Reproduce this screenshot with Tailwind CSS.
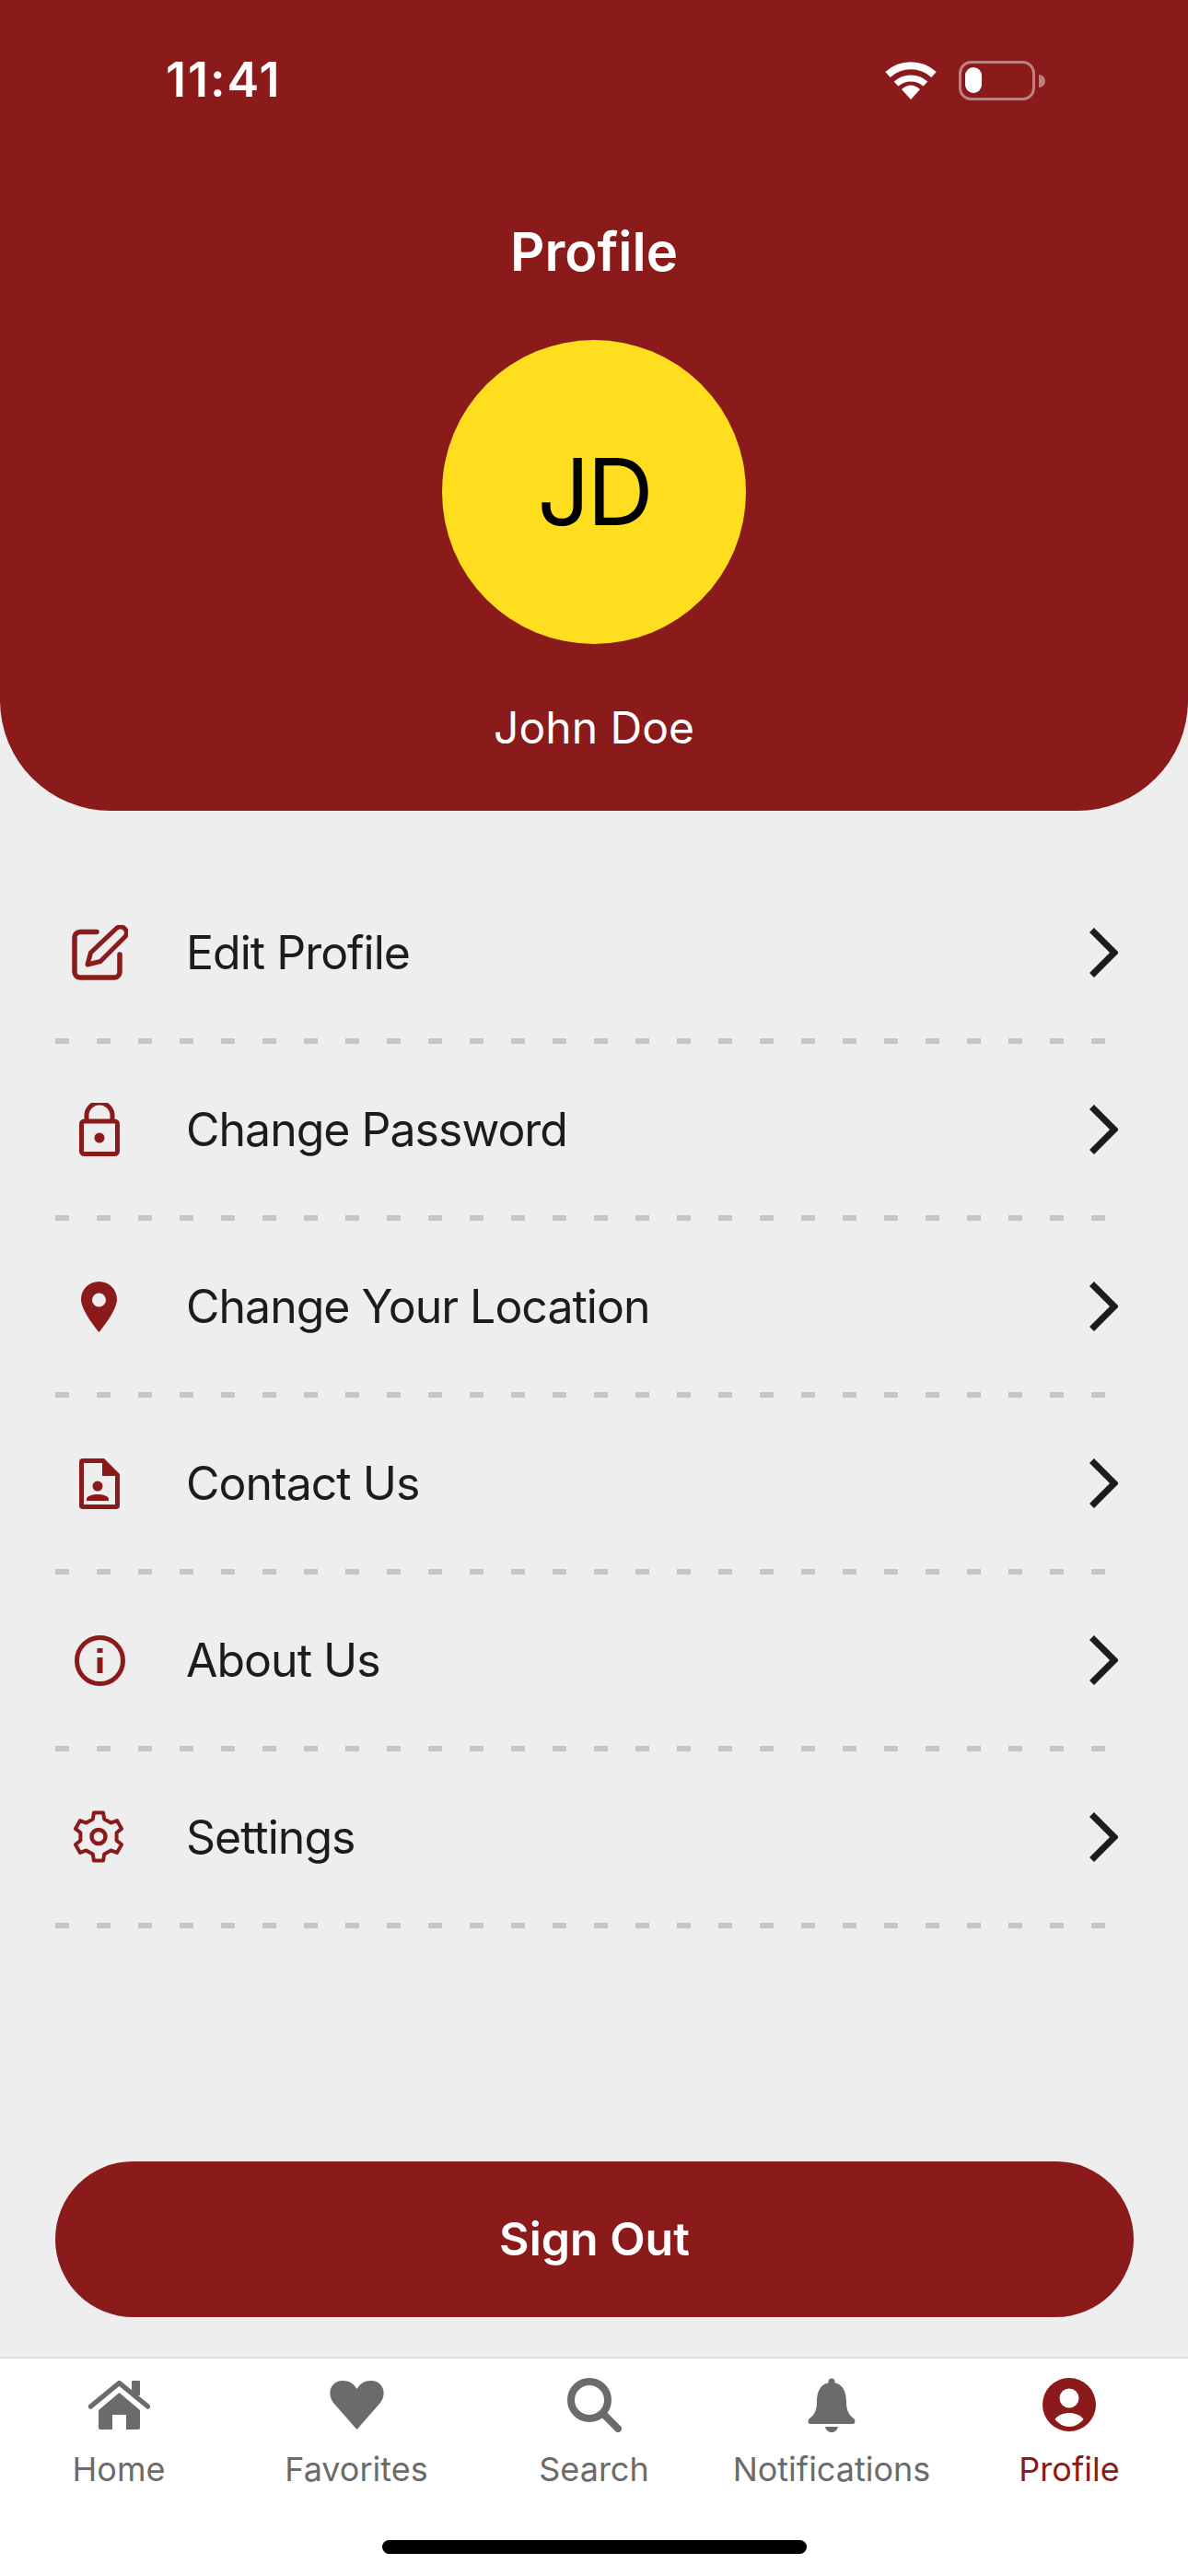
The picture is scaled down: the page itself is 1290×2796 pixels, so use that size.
<!DOCTYPE html>
<html lang="en">
<head>
  <meta charset="UTF-8" />
  <title>Profile</title>
  <script src="https://cdn.jsdelivr.net/npm/@tailwindcss/browser@4"></script>
</head>
<body class="w-[1290px] h-[2796px] overflow-hidden flex flex-col bg-[#eeeeee] font-['Inter',sans-serif]">

  <!-- header -->
  <header class="h-[880px] shrink-0 flex flex-col bg-[#8b1a1a] rounded-b-[120px] text-white">
    <div class="h-[174px] flex items-center justify-between pl-[180px] pr-[155px]">
      <span class="text-[52px] leading-none font-semibold tracking-[2px]">11:41</span>
      <div class="flex items-center gap-[23px]">
        <svg class="w-[58px] h-[42px]" viewBox="0 0 58 42" fill="none" stroke="#fff">
          <path d="M4 15A37 37 0 0 1 54 15" stroke-width="8" />
          <path d="M13 25A24 24 0 0 1 45 25" stroke-width="7" />
          <path d="M29 42L19 31Q29 22 39 31Z" fill="#fff" stroke="none" />
        </svg>
        <svg class="w-[94px] h-[43px]" viewBox="0 0 94 43" fill="none">
          <rect x="1.5" y="1.5" width="80" height="40" rx="12" stroke="#fff" stroke-opacity=".45" stroke-width="3" />
          <rect x="7" y="7" width="18" height="28" rx="9" fill="#fff" />
          <path d="M87 15a7 7 0 0 1 0 14z" fill="#fff" fill-opacity=".45" />
        </svg>
      </div>
    </div>
    <h1 class="mt-[59px] h-[80px] flex items-center justify-center text-[58px] font-semibold">Profile</h1>
    <div class="mt-[56px] mx-auto w-[330px] h-[330px] rounded-full bg-[#ffdd1f] flex items-center justify-center text-[100px] tracking-[-3px] text-black">JD</div>
    <p class="mt-[61px] h-[60px] flex items-center justify-center text-[48px]">John Doe</p>
  </header>

  <main class="flex-1 flex flex-col pt-[61px]">
    <ul class="text-[50px] tracking-[-1px] text-[#1c1c1e]">
      <li>
        <a class="h-[186px] flex items-center pl-[78px] pr-[76px]">
          <span class="w-[124px] h-[60px] shrink-0">
            <svg class="w-[61px] h-[60px]" viewBox="0 0 61 60" fill="none" stroke="#8b1a1a" stroke-width="5.500" stroke-linecap="round" stroke-linejoin="round">
              <path d="M27 7.500H9a6 6 0 0 0-6 6V51a6 6 0 0 0 6 6H46a6 6 0 0 0 6-6V32" />
              <path d="M17 43L20.500 30L48 4a6.500 6.500 0 0 1 9.500 9L31 39.500Z" stroke-width="5" />
            </svg>
          </span>
          <span class="flex-1">Edit Profile</span>
          <svg class="w-[31px] h-[54px]" viewBox="0 0 31 54" fill="none" stroke="#1c1c1e" stroke-width="7"><path d="M2.500 2.500L27 27L2.500 51.500" /></svg>
        </a>
        <div class="ml-[60px] w-[1140px] h-[6px] bg-[repeating-linear-gradient(90deg,#c6c6c8_0_15px,transparent_15px_45px)]"></div>
      </li>
      <li>
        <a class="h-[186px] flex items-center pl-[78px] pr-[76px]">
          <span class="w-[124px] h-[60px] shrink-0 flex items-center pl-[8px]">
            <svg class="w-[44px] h-[58px]" viewBox="0 0 44 58" fill="none" stroke="#8b1a1a" stroke-width="5" stroke-linejoin="round">
              <path d="M8 20V14a14 14 0 0 1 28 0V20" />
              <rect x="2.500" y="20" width="39" height="35.500" rx="3" />
              <circle cx="22" cy="38" r="5.500" fill="#8b1a1a" stroke="none" />
            </svg>
          </span>
          <span class="flex-1">Change Password</span>
          <svg class="w-[31px] h-[54px]" viewBox="0 0 31 54" fill="none" stroke="#1c1c1e" stroke-width="7"><path d="M2.500 2.500L27 27L2.500 51.500" /></svg>
        </a>
        <div class="ml-[60px] w-[1140px] h-[6px] bg-[repeating-linear-gradient(90deg,#c6c6c8_0_15px,transparent_15px_45px)]"></div>
      </li>
      <li>
        <a class="h-[186px] flex items-center pl-[78px] pr-[76px]">
          <span class="w-[124px] h-[60px] shrink-0 flex items-center pl-[10px]">
            <svg class="w-[39px] h-[55px]" viewBox="0 0 39 55" fill="#8b1a1a">
              <path fill-rule="evenodd" d="M19.500 0C8.500 0 0 8.500 0 19.500C0 32 19.500 55 19.500 55S39 32 39 19.500C39 8.500 30.500 0 19.500 0ZM19.500 12.500a7.500 7.500 0 1 1 0 15a7.500 7.500 0 1 1 0-15Z" />
            </svg>
          </span>
          <span class="flex-1">Change Your Location</span>
          <svg class="w-[31px] h-[54px]" viewBox="0 0 31 54" fill="none" stroke="#1c1c1e" stroke-width="7"><path d="M2.500 2.500L27 27L2.500 51.500" /></svg>
        </a>
        <div class="ml-[60px] w-[1140px] h-[6px] bg-[repeating-linear-gradient(90deg,#c6c6c8_0_15px,transparent_15px_45px)]"></div>
      </li>
      <li>
        <a class="h-[186px] flex items-center pl-[78px] pr-[76px]">
          <span class="w-[124px] h-[60px] shrink-0 flex items-center pl-[8px]">
            <svg class="w-[44px] h-[55px]" viewBox="0 0 44 55" fill="#8b1a1a">
              <path fill-rule="evenodd" d="M4 0H27L44 17V51a4 4 0 0 1-4 4H4a4 4 0 0 1-4-4V4a4 4 0 0 1 4-4ZM5 5V50H39V19H25V5Z" />
              <circle cx="20" cy="30" r="5.500" />
              <path d="M8 46V44C8 41 14 39 20 39S32 41 32 44V46Z" />
            </svg>
          </span>
          <span class="flex-1">Contact Us</span>
          <svg class="w-[31px] h-[54px]" viewBox="0 0 31 54" fill="none" stroke="#1c1c1e" stroke-width="7"><path d="M2.500 2.500L27 27L2.500 51.500" /></svg>
        </a>
        <div class="ml-[60px] w-[1140px] h-[6px] bg-[repeating-linear-gradient(90deg,#c6c6c8_0_15px,transparent_15px_45px)]"></div>
      </li>
      <li>
        <a class="h-[186px] flex items-center pl-[78px] pr-[76px]">
          <span class="w-[124px] h-[60px] shrink-0 flex items-center pl-[3px]">
            <svg class="w-[55px] h-[55px]" viewBox="0 0 55 55" fill="#8b1a1a">
              <circle cx="27.500" cy="27.500" r="25" fill="none" stroke="#8b1a1a" stroke-width="5" />
              <rect x="24.500" y="14" width="6" height="5" />
              <rect x="24.500" y="24" width="6" height="17" />
            </svg>
          </span>
          <span class="flex-1">About Us</span>
          <svg class="w-[31px] h-[54px]" viewBox="0 0 31 54" fill="none" stroke="#1c1c1e" stroke-width="7"><path d="M2.500 2.500L27 27L2.500 51.500" /></svg>
        </a>
        <div class="ml-[60px] w-[1140px] h-[6px] bg-[repeating-linear-gradient(90deg,#c6c6c8_0_15px,transparent_15px_45px)]"></div>
      </li>
      <li>
        <a class="h-[186px] flex items-center pl-[78px] pr-[76px]">
          <span class="w-[124px] h-[60px] shrink-0">
            <svg class="w-[58px] h-[59px]" viewBox="0 0 58 59" fill="none" stroke="#8b1a1a" stroke-width="4" stroke-linejoin="round">
              <g transform="translate(29 29.500)">
                <polygon points="-6.200,-19 -5.100,-26 5.100,-26 6.200,-19 13.400,-14.900 20,-17.400 25.100,-8.600 19.600,-4.200 19.600,4.200 25.100,8.600 20,17.400 13.400,14.900 6.200,19 5.100,26 -5.100,26 -6.200,19 -13.400,14.900 -20,17.400 -25.100,8.600 -19.600,4.200 -19.600,-4.200 -25.100,-8.600 -20,-17.400 -13.400,-14.900" />
                <circle r="7.500" stroke-width="4.500" />
              </g>
            </svg>
          </span>
          <span class="flex-1">Settings</span>
          <svg class="w-[31px] h-[54px]" viewBox="0 0 31 54" fill="none" stroke="#1c1c1e" stroke-width="7"><path d="M2.500 2.500L27 27L2.500 51.500" /></svg>
        </a>
        <div class="ml-[60px] w-[1140px] h-[6px] bg-[repeating-linear-gradient(90deg,#c6c6c8_0_15px,transparent_15px_45px)]"></div>
      </li>
    </ul>

    <button class="mt-auto mb-[43px] ml-[60px] mr-[59px] h-[169px] rounded-full bg-[#8b1a1a] text-white text-[50px] font-semibold">Sign Out</button>
  </main>

  <!-- tab bar -->
  <nav class="h-[238px] shrink-0 bg-white border-t-2 border-[#dddddd] pt-[20px]">
    <div class="grid grid-cols-5 text-[36px] text-[#6b6b6b]">
      <div class="flex flex-col items-center">
        <span class="h-[60px] flex items-center">
          <svg class="w-[67px] h-[53px]" viewBox="0 0 67 53" fill="#6b6b6b">
            <path d="M2.500 28L33.500 2.500L64.500 28" fill="none" stroke="#6b6b6b" stroke-width="5.500" stroke-linecap="round" stroke-linejoin="round" />
            <rect x="47" y="0" width="9" height="16" rx="1" />
            <path d="M33.500 13L56 32V51a2 2 0 0 1-2 2H41V37H26V53H13a2 2 0 0 1-2-2V32Z" />
          </svg>
        </span>
        <span class="mt-[15px] leading-[50px]">Home</span>
      </div>
      <div class="flex flex-col items-center">
        <span class="h-[60px] flex items-center">
          <svg class="w-[61px] h-[53px]" viewBox="0 0 61 53" fill="#6b6b6b">
            <path d="M30.500 53L5 24C-3 13 3 0 15 0C22 0 27 3 30.500 9C34 3 39 0 46 0C58 0 64 13 56 24Z" />
          </svg>
        </span>
        <span class="mt-[15px] leading-[50px]">Favorites</span>
      </div>
      <div class="flex flex-col items-center">
        <span class="h-[60px] flex items-center">
          <svg class="w-[60px] h-[60px]" viewBox="0 0 60 60" fill="none" stroke="#6b6b6b" stroke-width="8">
            <circle cx="25" cy="25" r="20" />
            <path d="M40 40L56 56" stroke-linecap="round" />
          </svg>
        </span>
        <span class="mt-[15px] leading-[50px]">Search</span>
      </div>
      <div class="flex flex-col items-center">
        <span class="h-[60px] flex items-center">
          <svg class="w-[52px] h-[59px]" viewBox="0 0 52 59" fill="#6b6b6b">
            <circle cx="26" cy="4" r="3.500" />
            <path d="M26 5C14 5 10 15 10 26C10 36 7 40 2 44C0 46 0 50 3 50H49C52 50 52 46 50 44C45 40 42 36 42 26C42 15 38 5 26 5Z" />
            <path d="M19 53H33C32 57 29 59 26 59S20 57 19 53Z" />
          </svg>
        </span>
        <span class="mt-[15px] leading-[50px]">Notifications</span>
      </div>
      <div class="flex flex-col items-center text-[#8b1a1a]">
        <span class="h-[60px] flex items-center">
          <svg class="w-[58px] h-[58px]" viewBox="0 0 58 58">
            <circle cx="29" cy="29" r="29" fill="#8b1a1a" />
            <circle cx="29" cy="22" r="10.500" fill="#fff" />
            <path d="M13.500 45C17 40 23 38 29 38S41 40 44.500 45C40 50 35 53 29 53S18 50 13.500 45Z" fill="#fff" />
          </svg>
        </span>
        <span class="mt-[15px] leading-[50px]">Profile</span>
      </div>
    </div>
    <div class="mt-[52px] mx-auto w-[461px] h-[15px] rounded-full bg-black"></div>
  </nav>
</body>
</html>
